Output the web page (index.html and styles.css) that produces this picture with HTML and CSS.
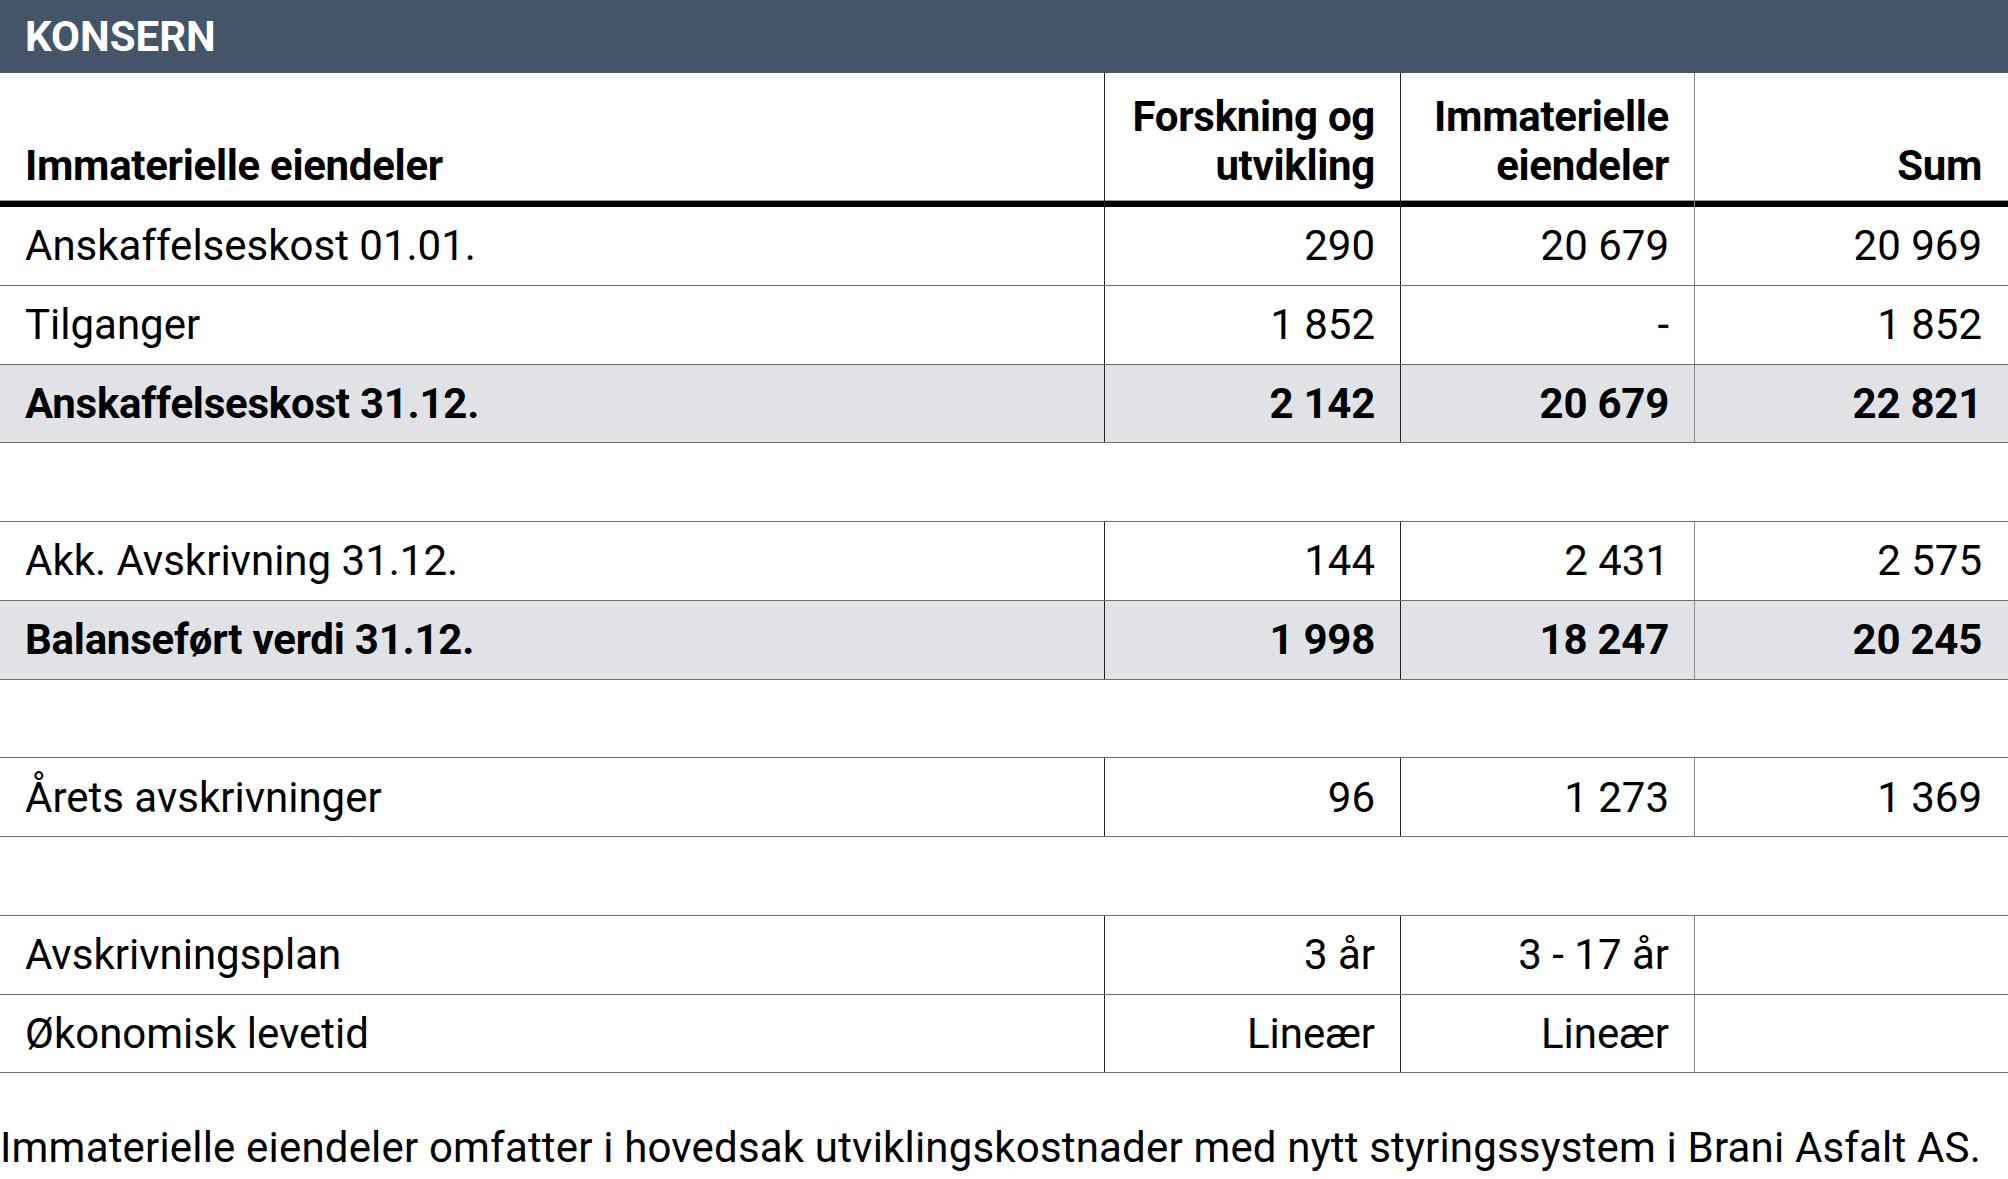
FILE: index.html
```html
<!DOCTYPE html>
<html lang="no">
<head>
<meta charset="utf-8">
<title>Konsern – Immaterielle eiendeler</title>
<link rel="stylesheet" href="styles.css">
</head>
<body>
<div class="page">
  <div class="bar">KONSERN</div>
  <div class="table">
    <div class="row head">
      <div class="cell label">Immaterielle eiendeler</div>
      <div class="cell num">Forskning og<br>utvikling</div>
      <div class="cell num">Immaterielle<br>eiendeler</div>
      <div class="cell num last">Sum</div>
    </div>
    <div class="row">
      <div class="cell label">Anskaffelseskost 01.01.</div>
      <div class="cell num">290</div>
      <div class="cell num">20 679</div>
      <div class="cell num last">20 969</div>
    </div>
    <div class="row">
      <div class="cell label">Tilganger</div>
      <div class="cell num">1 852</div>
      <div class="cell num">-</div>
      <div class="cell num last">1 852</div>
    </div>
    <div class="row total">
      <div class="cell label">Anskaffelseskost 31.12.</div>
      <div class="cell num">2 142</div>
      <div class="cell num">20 679</div>
      <div class="cell num last">22 821</div>
    </div>
    <div class="row spacer"></div>
    <div class="row">
      <div class="cell label">Akk. Avskrivning 31.12.</div>
      <div class="cell num">144</div>
      <div class="cell num">2 431</div>
      <div class="cell num last">2 575</div>
    </div>
    <div class="row total">
      <div class="cell label">Balanseført verdi 31.12.</div>
      <div class="cell num">1 998</div>
      <div class="cell num">18 247</div>
      <div class="cell num last">20 245</div>
    </div>
    <div class="row spacer"></div>
    <div class="row">
      <div class="cell label">Årets avskrivninger</div>
      <div class="cell num">96</div>
      <div class="cell num">1 273</div>
      <div class="cell num last">1 369</div>
    </div>
    <div class="row spacer"></div>
    <div class="row">
      <div class="cell label">Avskrivningsplan</div>
      <div class="cell num">3 år</div>
      <div class="cell num">3 - 17 år</div>
      <div class="cell num last"></div>
    </div>
    <div class="row">
      <div class="cell label">Økonomisk levetid</div>
      <div class="cell num">Lineær</div>
      <div class="cell num">Lineær</div>
      <div class="cell num last"></div>
    </div>
  </div>
  <p class="note">Immaterielle eiendeler omfatter i hovedsak utviklingskostnader med nytt styringssystem i Brani Asfalt AS.</p>
</div>
</body>
</html>
```

FILE: styles.css
```css
html, body {
  margin: 0;
  padding: 0;
  background: #ffffff;
}

body {
  font-family: Roboto, "Liberation Sans", sans-serif;
  color: #000000;
  font-size: 42px;
  line-height: 49px;
}

.page {
  width: 2008px;
}

.bar {
  height: 73px;
  box-sizing: border-box;
  background: #445569;
  color: #ffffff;
  font-weight: 700;
  font-size: 42px;
  line-height: 73px;
  padding-left: 25px;
}

.table {
  display: flex;
  flex-direction: column;
}

.row {
  display: grid;
  grid-template-columns: 1104px 296px 294px 1fr;
  height: 78.75px;
  box-sizing: border-box;
  border-bottom: 1px solid #6e6e6e;
}

.row.head {
  height: 134px;
  border-bottom: none;
  box-shadow: inset 0 -6px 0 #000000, inset 0 -7px 0 #9a9a9a;
  font-weight: 700;
  letter-spacing: -0.3px;
}

.row.head .cell {
  align-items: flex-end;
  padding-bottom: 17px;
}

.row.total {
  background: #e1e2e6;
  font-weight: 700;
  letter-spacing: -0.25px;
}

.cell {
  display: flex;
  align-items: center;
  box-sizing: border-box;
  white-space: nowrap;
}

.cell.label {
  padding-left: 25px;
}

.cell.num {
  justify-content: flex-end;
  text-align: right;
  padding-right: 25px;
  border-left: 1px solid #222222;
}

.cell.num.last {
  padding-right: 26px;
  border-left-color: #8a8a8a;
}

.row.spacer {
  display: block;
}

.note {
  margin: 50px 0 0 0;
  font-size: 42px;
  line-height: 49px;
  letter-spacing: 0.18px;
  white-space: nowrap;
}
```
